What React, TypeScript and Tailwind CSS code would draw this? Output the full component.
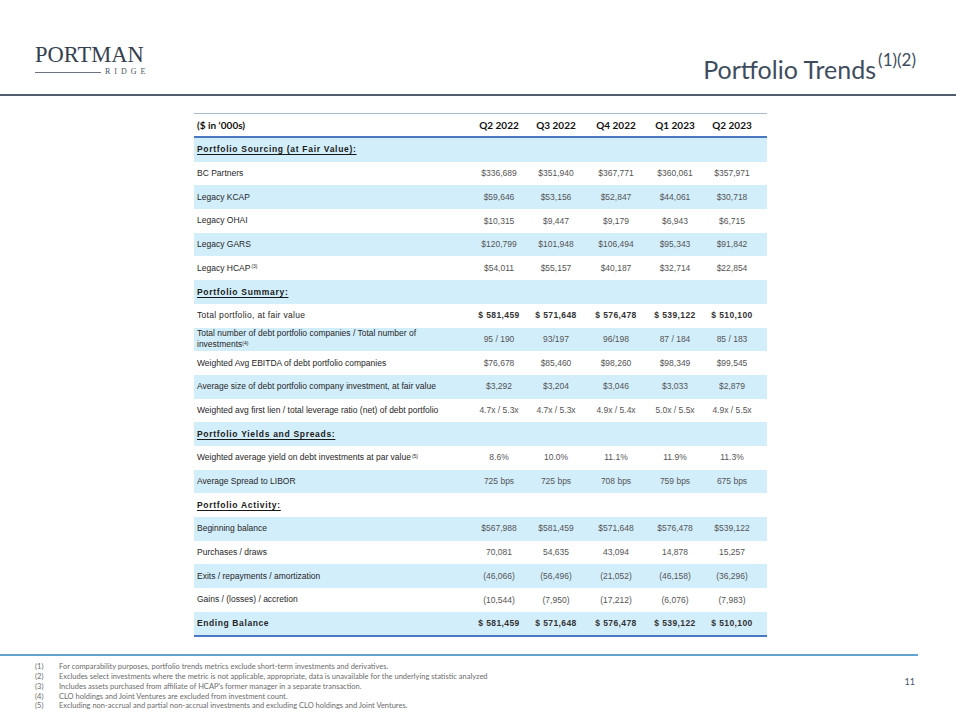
import React from "react";

type Row =
  | { kind: "section"; label: string; bg: boolean }
  | { kind: "data"; label: string; sup?: string; vals: string[]; bg: boolean; bold?: boolean; label2?: string };

const rows: Row[] = [
  { kind: "section", label: "Portfolio Sourcing (at Fair Value):", bg: true },
  { kind: "data", label: "BC Partners", vals: ["$336,689", "$351,940", "$367,771", "$360,061", "$357,971"], bg: false },
  { kind: "data", label: "Legacy KCAP", vals: ["$59,646", "$53,156", "$52,847", "$44,061", "$30,718"], bg: true },
  { kind: "data", label: "Legacy OHAI", vals: ["$10,315", "$9,447", "$9,179", "$6,943", "$6,715"], bg: false },
  { kind: "data", label: "Legacy GARS", vals: ["$120,799", "$101,948", "$106,494", "$95,343", "$91,842"], bg: true },
  { kind: "data", label: "Legacy HCAP", sup: "(3)", vals: ["$54,011", "$55,157", "$40,187", "$32,714", "$22,854"], bg: false },
  { kind: "section", label: "Portfolio Summary:", bg: true },
  { kind: "data", label: "Total portfolio, at fair value", vals: ["$ 581,459", "$ 571,648", "$ 576,478", "$ 539,122", "$ 510,100"], bg: false, bold: true },
  {
    kind: "data",
    label: "Total number of debt portfolio companies / Total number of",
    label2: "investments",
    sup: "(4)",
    vals: ["95 / 190", "93/197", "96/198", "87 / 184", "85 / 183"],
    bg: true,
  },
  { kind: "data", label: "Weighted Avg EBITDA of debt portfolio companies", vals: ["$76,678", "$85,460", "$98,260", "$98,349", "$99,545"], bg: false },
  { kind: "data", label: "Average size of debt portfolio company investment, at fair value", vals: ["$3,292", "$3,204", "$3,046", "$3,033", "$2,879"], bg: true },
  { kind: "data", label: "Weighted avg first lien / total leverage ratio (net) of debt portfolio", vals: ["4.7x / 5.3x", "4.7x / 5.3x", "4.9x / 5.4x", "5.0x / 5.5x", "4.9x / 5.5x"], bg: false },
  { kind: "section", label: "Portfolio Yields and Spreads:", bg: true },
  { kind: "data", label: "Weighted average yield on debt investments at par value", sup: "(5)", vals: ["8.6%", "10.0%", "11.1%", "11.9%", "11.3%"], bg: false },
  { kind: "data", label: "Average Spread to LIBOR", vals: ["725 bps", "725 bps", "708 bps", "759 bps", "675 bps"], bg: true },
  { kind: "section", label: "Portfolio Activity:", bg: false },
  { kind: "data", label: "Beginning balance", vals: ["$567,988", "$581,459", "$571,648", "$576,478", "$539,122"], bg: true },
  { kind: "data", label: "Purchases / draws", vals: ["70,081", "54,635", "43,094", "14,878", "15,257"], bg: false },
  { kind: "data", label: "Exits / repayments / amortization", vals: ["(46,066)", "(56,496)", "(21,052)", "(46,158)", "(36,296)"], bg: true },
  { kind: "data", label: "Gains / (losses) / accretion", vals: ["(10,544)", "(7,950)", "(17,212)", "(6,076)", "(7,983)"], bg: false },
  { kind: "data", label: "Ending Balance", vals: ["$ 581,459", "$ 571,648", "$ 576,478", "$ 539,122", "$ 510,100"], bg: true, bold: true },
];

const quarters = ["Q2 2022", "Q3 2022", "Q4 2022", "Q1 2023", "Q2 2023"];
const colW = ["w-[56px]", "w-[58px]", "w-[62px]", "w-[56px]", "w-[58px]"];

const footnotes = [
  "For comparability purposes, portfolio trends metrics exclude short-term investments and derivatives.",
  "Excludes select investments where the metric is not applicable, appropriate, data is unavailable for the underlying statistic analyzed",
  "Includes assets purchased from affiliate of HCAP\u2019s former manager in a separate transaction.",
  "CLO holdings and Joint Ventures are excluded from investment count.",
  "Excluding non-accrual and partial non-accrual investments and excluding CLO holdings and Joint Ventures.",
];

function TableRow({ row }: { row: Row }) {
  const bg = row.bg ? "bg-[#d3eefb]" : "bg-white";
  if (row.kind === "section") {
    return (
      <div className={`flex h-[23.7px] items-center pl-[3px] ${bg}`}>
        <span className="text-[8.5px] font-bold tracking-[0.7px] text-[#1a1a1a] underline underline-offset-2">
          {row.label}
        </span>
      </div>
    );
  }
  const isEnding = row.label === "Ending Balance";
  return (
    <div className={`flex h-[23.7px] items-center ${bg}`}>
      <div
        className={`w-[277px] pl-[3px] text-[8.5px] leading-[11px] text-[#262626] ${
          isEnding ? "font-bold tracking-[0.6px]" : row.bold ? "tracking-[0.3px]" : ""
        }`}
      >
        {row.label2 ? (
          <>
            <div>{row.label}</div>
            <div>
              {row.label2}
              <sup className="text-[5px]">{row.sup}</sup>
            </div>
          </>
        ) : (
          <>
            {row.label}
            {row.sup ? <sup className="ml-[1px] text-[5px]">{row.sup}</sup> : null}
          </>
        )}
      </div>
      {row.vals.map((v, i) => (
        <div
          key={i}
          className={`${colW[i]} text-center text-[8.5px] ${
            row.bold ? "font-bold tracking-[0.4px] text-[#333]" : "text-[#555]"
          }`}
        >
          {v}
        </div>
      ))}
    </div>
  );
}

export default function App() {
  return (
    <div className="relative flex h-[720px] w-[960px] flex-col overflow-hidden bg-white font-['Liberation_Sans',Arial,sans-serif]">
      {/* header */}
      <div className="flex h-[94px] items-start justify-between">
        <div className="pl-[35px] pt-[44px]">
          <div className="font-['Liberation_Serif',serif] text-[22.5px] leading-[22px] text-[#34404f]">
            PORTMAN
          </div>
          <div className="mt-[1px] flex items-center">
            <div className="h-px w-[66px] bg-[#6b7480]" />
            <span className="ml-[4px] font-['Liberation_Serif',serif] text-[8px] leading-[10px] tracking-[4px] text-[#4a5563]">
              RIDGE
            </span>
          </div>
        </div>
        <div className="pr-[44px] pt-[52px] font-['Lato',sans-serif] text-[25px] leading-[34px] text-[#3e4d5e]">
          Portfolio Trends
          <sup className="relative -top-[13px] ml-[2px] text-[17px]">(1)(2)</sup>
        </div>
      </div>
      <div className="h-[2px] w-[956px] bg-[#4f5d6c]" />

      {/* table */}
      <div className="ml-[194px] mt-[17px] w-[573px]">
        <div className="h-px bg-[#a9bccd]" />
        <div className="flex h-[22px] items-center font-['Lato',sans-serif] text-[10px] font-bold text-[#111]">
          <div className="w-[277px] pl-[3px]">($ in &#8216;000s)</div>
          {quarters.map((q, i) => (
            <div key={q} className={`${colW[i]} text-center`}>
              {q}
            </div>
          ))}
        </div>
        <div className="h-[2px] bg-[#4a78c2]" />
        {rows.map((r, i) => (
          <TableRow key={i} row={r} />
        ))}
        <div className="h-[2px] bg-[#4a78c2]" />
      </div>

      {/* footer */}
      <div className="mt-[17px] h-[2px] w-[918px] bg-[#62a3cf]" />
      <div className="flex justify-between">
        <div className="ml-[35px] mt-[6px] font-['Lato',sans-serif] text-[7.5px] leading-[9.7px] text-[#6b6b6b]">
          {footnotes.map((f, i) => (
            <div key={i} className="flex">
              <span className="w-[24px]">({i + 1})</span>
              <span>{f}</span>
            </div>
          ))}
        </div>
        <div className="mr-[45px] mt-[19px] font-['Lato',sans-serif] text-[9px] text-[#44546a]">11</div>
      </div>
    </div>
  );
}
